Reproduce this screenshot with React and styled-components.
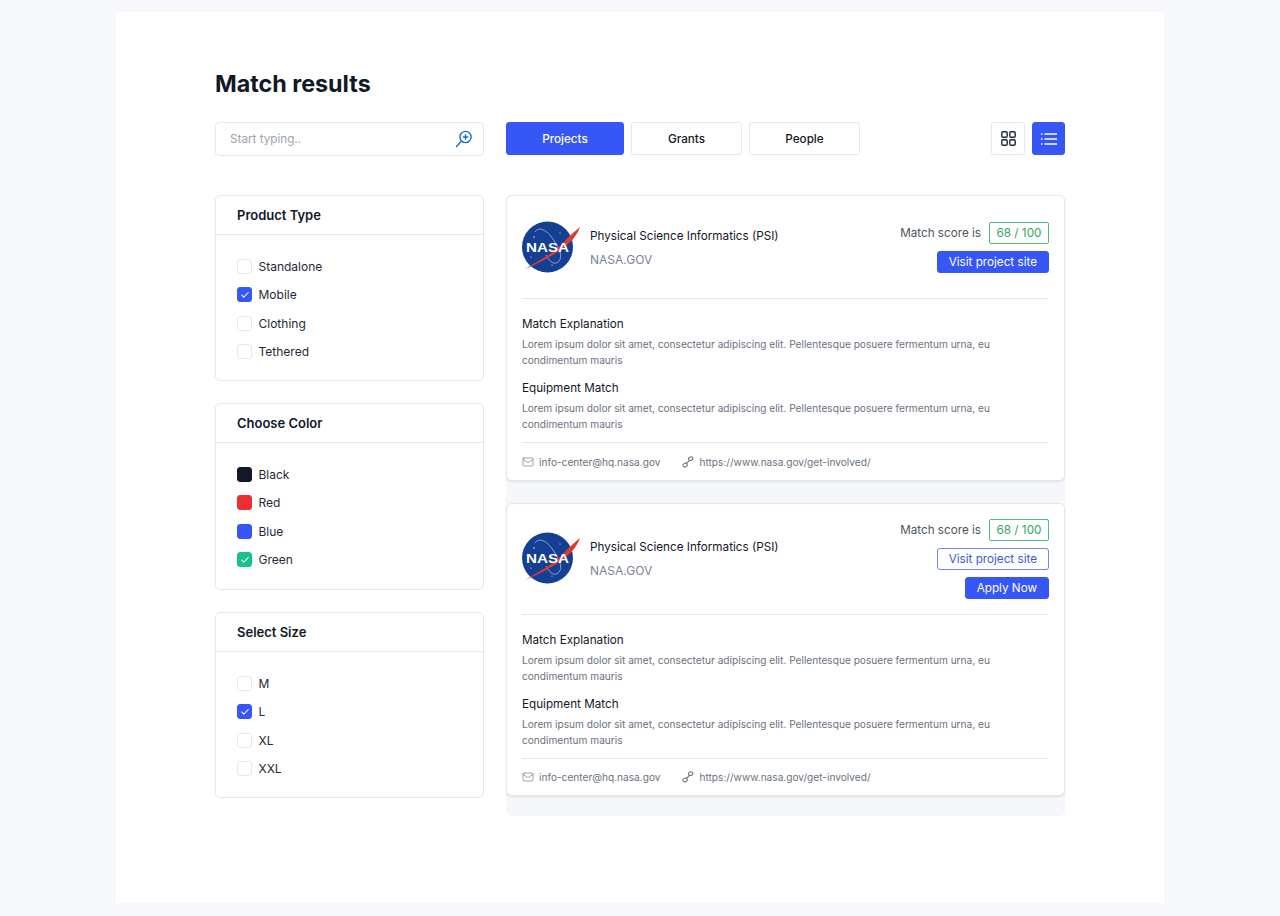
import styled, { createGlobalStyle } from "styled-components";
import { Check, Mail } from "lucide-react";

const GlobalStyle = createGlobalStyle`
  html, body {
    margin: 0;
    padding: 0;
    background: #f6f8fb;
    font-family: "Inter", "Liberation Sans", sans-serif;
    color: #111827;
  }
  * { box-sizing: border-box; }
`;

const Panel = styled.main`
  width: 1048px;
  height: 891px;
  margin: 12px 0 0 116px;
  padding: 56px 99px 0;
  background: #fff;
`;

const Title = styled.h1`
  margin: 0;
  font-size: 23.3px;
  line-height: 31px;
  font-weight: 700;
  color: #111827;
`;

const Toolbar = styled.div`
  display: flex;
  align-items: flex-start;
  margin-top: 23px;
`;

const Search = styled.div`
  width: 269px;
  height: 34px;
  margin-right: 22px;
  padding: 0 10px 0 14px;
  display: flex;
  align-items: center;
  justify-content: space-between;
  border: 1px solid #e5e7eb;
  border-radius: 4px;
  font-size: 11.7px;
  color: #9ca3af;
`;

const Tab = styled.button`
  width: ${(p) => p.$width}px;
  height: 33px;
  margin-right: 7px;
  padding: 0;
  border: 1px solid ${(p) => (p.$active ? "#3656f5" : "#e5e7eb")};
  border-radius: 3px;
  background: ${(p) => (p.$active ? "#3656f5" : "#fff")};
  color: ${(p) => (p.$active ? "#fff" : "#111827")};
  font: 500 11.7px "Inter", sans-serif;
`;

const ViewSwitch = styled.div`
  margin-left: auto;
  display: flex;
  gap: 7px;
`;

const IconButton = styled.button`
  width: ${(p) => (p.$active ? 33 : 34)}px;
  height: 33px;
  padding: 0;
  display: flex;
  align-items: center;
  justify-content: center;
  border: 1px solid ${(p) => (p.$active ? "#3656f5" : "#e5e7eb")};
  border-radius: 3px;
  background: ${(p) => (p.$active ? "#3656f5" : "#fff")};
  color: ${(p) => (p.$active ? "#fff" : "#1f2937")};
`;

const Columns = styled.div`
  display: flex;
  align-items: flex-start;
  gap: 22px;
  margin-top: 39px;
`;

const Sidebar = styled.aside`
  width: 269px;
  display: flex;
  flex-direction: column;
  gap: 22px;
`;

const FilterCard = styled.section`
  height: ${(p) => p.$height}px;
  border: 1px solid #e5e7eb;
  border-radius: 5px;
`;

const FilterTitle = styled.h2`
  margin: 0;
  height: 38.5px;
  padding: 0 21px;
  display: flex;
  align-items: center;
  border-bottom: 1px solid #e5e7eb;
  font-size: 13px;
  font-weight: 600;
  color: #111827;
`;

const FilterList = styled.ul`
  list-style: none;
  margin: 0;
  padding: 18px 21px 0;
  display: flex;
  flex-direction: column;
`;

const FilterItem = styled.li`
  height: 28.3px;
  display: flex;
  align-items: center;
  gap: 6.5px;
  font-size: 12px;
  color: #1f2937;
`;

const Box = styled.span`
  width: 15px;
  height: 15px;
  display: flex;
  align-items: center;
  justify-content: center;
  border: 1px solid ${(p) => p.$color || "#e5e7eb"};
  border-radius: 3px;
  background: ${(p) => p.$color || "#fff"};
  color: #fff;
`;

const Results = styled.div`
  width: 559px;
  height: 621px;
  display: flex;
  flex-direction: column;
  gap: 22px;
  border-radius: 6px;
  background: #f5f7fa;
`;

const Card = styled.article`
  height: ${(p) => p.$height}px;
  padding: 0 15px;
  border: 1px solid #e5e7eb;
  border-radius: 6px;
  background: #fff;
  box-shadow: 0 1px 2px rgba(17, 24, 39, 0.1);
  display: flex;
  flex-direction: column;
`;

const CardHead = styled.header`
  height: ${(p) => p.$height}px;
  display: flex;
  align-items: ${(p) => (p.$tall ? "flex-start" : "center")};
  justify-content: space-between;
  border-bottom: 1px solid #e5e7eb;
`;

const Org = styled.div`
  display: flex;
  align-items: center;
  gap: 10px;
  padding-top: ${(p) => p.$offset}px;
`;

const OrgText = styled.div`
  padding-top: 1px;
`;

const OrgName = styled.div`
  font-size: 11.7px;
  line-height: 16px;
  font-weight: 400;
  color: #111827;
`;

const OrgSite = styled.div`
  margin-top: 8px;
  font-size: 12px;
  line-height: 16px;
  color: #7b8494;
`;

const Score = styled.div`
  display: flex;
  flex-direction: column;
  align-items: flex-end;
  gap: 7px;
  padding-top: ${(p) => p.$offset}px;
`;

const ScoreLine = styled.div`
  display: flex;
  align-items: center;
  gap: 8px;
  font-size: 11.7px;
  color: #4b5563;
`;

const ScoreBadge = styled.span`
  width: 60px;
  height: 22px;
  display: flex;
  align-items: center;
  justify-content: center;
  border: 1px solid #4fba7d;
  border-radius: 2px;
  color: #2fa866;
  font-size: 11.7px;
`;

const ActionButton = styled.button`
  height: 22px;
  padding: 0 11px;
  border: 1px solid ${(p) => (p.$outline ? "#7286e0" : "#3656f5")};
  border-radius: 3px;
  background: ${(p) => (p.$outline ? "#fff" : "#3656f5")};
  color: ${(p) => (p.$outline ? "#3f5ad0" : "#fff")};
  font: 400 11.7px "Inter", sans-serif;
`;

const Block = styled.div`
  margin-top: ${(p) => p.$top}px;
`;

const BlockTitle = styled.h3`
  margin: 0;
  font-size: 11.7px;
  line-height: 16px;
  font-weight: 400;
  color: #111827;
`;

const BlockText = styled.p`
  margin: 4px 0 0;
  font-size: 10.15px;
  line-height: 16px;
  color: #6b7280;
`;

const CardFoot = styled.footer`
  margin-top: 10px;
  height: 37px;
  padding-top: ${(p) => (p.$tall ? 0 : 1)}px;
  display: flex;
  align-items: center;
  gap: 22px;
  border-top: 1px solid #e5e7eb;
  font-size: 10.15px;
  color: #6b7280;
`;

const FootItem = styled.span`
  display: flex;
  align-items: center;
  gap: 5px;
  color: #6b7280;
`;

const SearchPlusIcon = () => (
  <svg width="18" height="18" viewBox="0 0 18 18" fill="none" stroke="#1d6fb8" strokeWidth="1.4" strokeLinecap="round">
    <circle cx="10.5" cy="7" r="5.6" />
    <path d="M6.4 11 1.5 16.5M10.5 4.8v4.4M8.3 7h4.4" />
  </svg>
);

const GridIcon = () => (
  <svg width="15" height="15" viewBox="0 0 15 15" fill="none" stroke="currentColor" strokeWidth="1.4">
    <rect x="0.8" y="0.8" width="5.4" height="5.4" rx="1.2" />
    <rect x="8.8" y="0.8" width="5.4" height="5.4" rx="1.2" />
    <rect x="0.8" y="8.8" width="5.4" height="5.4" rx="1.2" />
    <rect x="8.8" y="8.8" width="5.4" height="5.4" rx="1.2" />
  </svg>
);

const ListIcon = () => (
  <svg width="16" height="14" viewBox="0 0 16 14" fill="none" stroke="#fff" strokeWidth="1.4">
    <path d="M3.5 2H16M3.5 7H16M3.5 12H16" />
    <path d="M0 2h1.4M0 7h1.4M0 12h1.4" />
  </svg>
);

const ChainIcon = () => (
  <svg width="12" height="12" viewBox="0 0 12 12" fill="none" stroke="currentColor" strokeWidth="1.1" strokeLinecap="round">
    <rect x="6.6" y="1" width="4.2" height="3.4" rx="1.6" transform="rotate(-20 8.7 2.7)" />
    <rect x="1" y="7.4" width="4.2" height="3.4" rx="1.6" transform="rotate(-20 3.1 9.1)" />
    <path d="M4.6 7.4 7.2 4.6" />
  </svg>
);

const NasaLogo = () => (
  <svg width="58" height="52" viewBox="0 0 58 52">
    <circle cx="25.5" cy="26" r="25.5" fill="#143f93" />
    <path d="M13 11 C17 5 25 9 31 18 C37 27 42 36 36 41 C31 45 26 38 24 34" fill="none" stroke="#dbe4f5" strokeWidth="0.6" />
    <circle cx="12" cy="16" r="0.7" fill="#fff" />
    <circle cx="38" cy="12" r="0.6" fill="#fff" />
    <circle cx="9" cy="36" r="0.6" fill="#fff" />
    <circle cx="30" cy="44" r="0.6" fill="#fff" />
    <path d="M3 48 C18 39 32 32 41 22 C47 15 53 10 58 6 C55 14 50 20 44 25 C34 33 18 42 3 48Z" fill="#dd3b32" />
    <text x="4" y="30.5" textLength="43" lengthAdjust="spacingAndGlyphs" fontFamily="Liberation Sans, sans-serif" fontSize="13.5" fontWeight="700" fill="#fff">
      NASA
    </text>
  </svg>
);

const filters = [
  {
    title: "Product Type",
    height: 186,
    items: [
      { label: "Standalone" },
      { label: "Mobile", checked: true, color: "#3656f5" },
      { label: "Clothing" },
      { label: "Tethered" },
    ],
  },
  {
    title: "Choose Color",
    height: 187,
    items: [
      { label: "Black", color: "#111827" },
      { label: "Red", color: "#ef2f2f" },
      { label: "Blue", color: "#3656f5" },
      { label: "Green", checked: true, color: "#1cc08f" },
    ],
  },
  {
    title: "Select Size",
    height: 186,
    items: [
      { label: "M" },
      { label: "L", checked: true, color: "#3656f5" },
      { label: "XL" },
      { label: "XXL" },
    ],
  },
];

const lorem =
  "Lorem ipsum dolor sit amet, consectetur adipiscing elit. Pellentesque posuere fermentum urna, eu condimentum mauris";

function ResultCard({ tall }) {
  return (
    <Card $height={tall ? 293 : 286}>
      <CardHead $height={tall ? 111 : 103} $tall={tall}>
        <Org $offset={tall ? 28 : 0}>
          <NasaLogo />
          <OrgText>
            <OrgName>Physical Science Informatics (PSI)</OrgName>
            <OrgSite>NASA.GOV</OrgSite>
          </OrgText>
        </Org>
        <Score $offset={tall ? 15 : 0}>
          <ScoreLine>
            Match score is <ScoreBadge>68 / 100</ScoreBadge>
          </ScoreLine>
          <ActionButton $outline={tall}>Visit project site</ActionButton>
          {tall && <ActionButton>Apply Now</ActionButton>}
        </Score>
      </CardHead>
      <Block $top={17}>
        <BlockTitle>Match Explanation</BlockTitle>
        <BlockText>{lorem}</BlockText>
      </Block>
      <Block $top={12}>
        <BlockTitle>Equipment Match</BlockTitle>
        <BlockText>{lorem}</BlockText>
      </Block>
      <CardFoot $tall={tall}>
        <FootItem>
          <Mail size={12} strokeWidth={1.3} />
          info-center@hq.nasa.gov
        </FootItem>
        <FootItem>
          <ChainIcon />
          https://www.nasa.gov/get-involved/
        </FootItem>
      </CardFoot>
    </Card>
  );
}

function App() {
  return (
    <>
      <GlobalStyle />
      <Panel>
        <Title>Match results</Title>
        <Toolbar>
          <Search>
            Start typing..
            <SearchPlusIcon />
          </Search>
          <Tab $width={118} $active>Projects</Tab>
          <Tab $width={111}>Grants</Tab>
          <Tab $width={111}>People</Tab>
          <ViewSwitch>
            <IconButton>
              <GridIcon />
            </IconButton>
            <IconButton $active>
              <ListIcon />
            </IconButton>
          </ViewSwitch>
        </Toolbar>
        <Columns>
          <Sidebar>
            {filters.map((filter) => (
              <FilterCard key={filter.title} $height={filter.height}>
                <FilterTitle>{filter.title}</FilterTitle>
                <FilterList>
                  {filter.items.map((item) => (
                    <FilterItem key={item.label}>
                      <Box $color={item.color}>
                        {item.checked && <Check size={10} strokeWidth={2.5} />}
                      </Box>
                      {item.label}
                    </FilterItem>
                  ))}
                </FilterList>
              </FilterCard>
            ))}
          </Sidebar>
          <Results>
            <ResultCard />
            <ResultCard tall />
          </Results>
        </Columns>
      </Panel>
    </>
  );
}

export default App;
